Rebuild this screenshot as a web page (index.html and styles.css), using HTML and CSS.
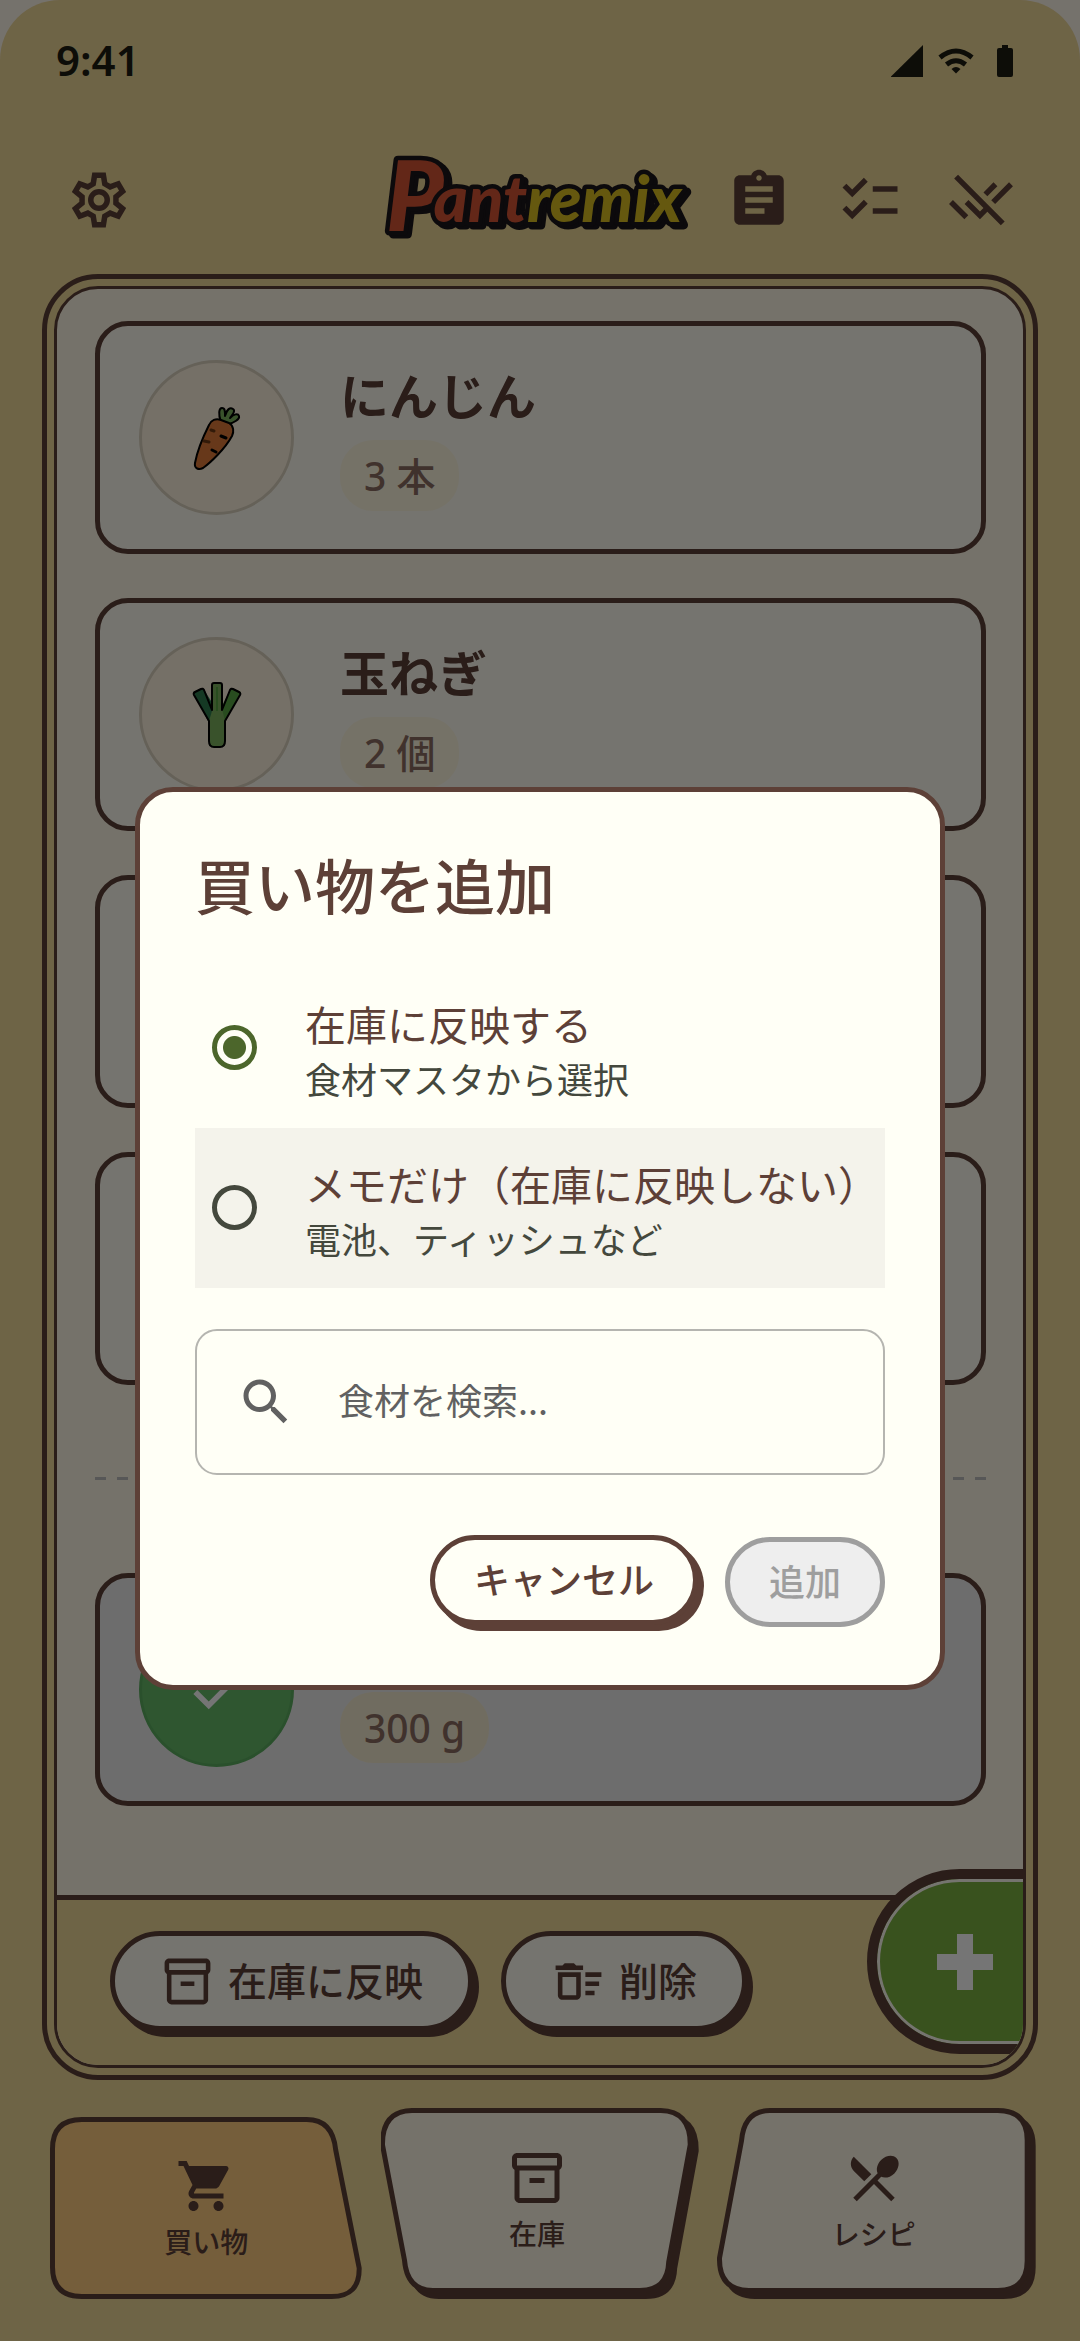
FILE: index.html
```html
<!DOCTYPE html>
<html lang="ja">
  <head>
    <meta charset="UTF-8" />
    <meta name="viewport" content="width=device-width, initial-scale=1.0" />
    <title>Pantremix</title>
    <link rel="stylesheet" href="styles.css">
  </head>
  <body>
    <!-- shared icons -->
    <svg class="sprite" width="0" height="0">
      <symbol id="i-box" viewBox="0 0 24 24">
        <path d="M20 2H4c-1 0-2 .9-2 2v3.01c0 .72.43 1.34 1 1.69V20c0 1.1 1.1 2 2 2h14c.9 0 2-.9 2-2V8.7c.57-.35 1-.97 1-1.69V4c0-1.1-1-2-2-2zm-1 18H5V9h14v11zm1-13H4V4h16v3zM9 12h6v2H9z" />
      </symbol>
    </svg>

    <div class="app">
      <div class="status">
        <span class="time">9:41</span>
        <svg class="status-icons" viewBox="0 0 128 34">
          <path d="M1 33V32.500L33 1v32z" />
          <g fill="none" stroke="#1d1d12" stroke-width="5">
            <path d="M50 13.500Q66 0.500 82 13.500" />
            <path d="M56.500 20.500Q66 13 75.500 20.500" />
          </g>
          <path d="M61.500 25q4.500-4 9 0L66 29.500z" />
          <path d="M112 1h6v3h3q2 0 2 2v25q0 2-2 2h-12q-2 0-2-2V6q0-2 2-2h3z" />
        </svg>
      </div>

      <header class="header">
        <button class="icon-btn" aria-label="設定">
          <svg viewBox="0 0 24 24">
            <g fill="none" stroke="#5d4037" stroke-width="2">
              <path d="M9.900 6.100L10.400 3h3.200l.5 3.100 1.960 1.130 2.930-1.120 1.600 2.780-2.430 1.980v2.260l2.430 1.980-1.600 2.780-2.930-1.120-1.960 1.130-.5 3.100h-3.200l-.5-3.100-1.960-1.130-2.930 1.120-1.600-2.780 2.430-1.980v-2.260L3.410 8.890l1.600-2.780 2.930 1.120z" />
              <circle cx="12" cy="12" r="3" />
            </g>
          </svg>
        </button>
        <svg class="logo" viewBox="0 0 312 90">
          <text x="1" y="76"><tspan class="big">P</tspan><tspan class="red" dx="-10" dy="-9">ant</tspan><tspan class="yellow">remix</tspan></text>
        </svg>
        <button class="icon-btn" aria-label="メモ">
          <svg viewBox="0 0 24 24"><path d="M19 3h-4.180C14.400 1.840 13.300 1 12 1s-2.400.84-2.820 2H5c-1.100 0-2 .9-2 2v14c0 1.100.9 2 2 2h14c1.100 0 2-.9 2-2V5c0-1.100-.9-2-2-2zm-7 0c.55 0 1 .45 1 1s-.45 1-1 1-1-.45-1-1 .45-1 1-1zm2 14H7v-2h7v2zm3-4H7v-2h10v2zm0-4H7V7h10v2z" /></svg>
        </button>
        <button class="icon-btn" aria-label="すべて選択">
          <svg viewBox="0 0 24 24"><path d="M22 7h-9v2h9V7zm0 8h-9v2h9v-2zM5.540 11L2 7.460l1.410-1.410 2.120 2.120 4.240-4.240 1.410 1.410L5.540 11zm0 8L2 15.460l1.410-1.410 2.120 2.120 4.240-4.240 1.410 1.410L5.540 19z" /></svg>
        </button>
        <button class="icon-btn" aria-label="選択解除">
          <svg viewBox="0 0 24 24"><path d="M1.790 12l5.580 5.590L5.960 19 .37 13.410 1.790 12zm.45-7.780L12.900 14.890l-1.280 1.280L7.440 12l-1.410 1.410L11.620 19l2.690-2.690 4.890 4.890 1.410-1.410L3.650 2.810 2.240 4.220zm14.900 9.270L23.620 7 22.200 5.590l-6.480 6.480 1.420 1.420zM17.960 7l-1.410-1.410-3.650 3.660 1.410 1.410L17.960 7z" /></svg>
        </button>
      </header>

      <main class="frame">
        <div class="panel">
          <div class="list">
            <div class="card">
              <div class="thumb">
                <svg viewBox="0 0 50 66">
                  <g stroke="#000" stroke-width="2" stroke-linejoin="round" stroke-linecap="round">
                    <path fill="#7cb35e" d="M29 17C26 9 27 3 30 3s3 3 3 8C35 4 38 2 41 4s-1 6-3 9c4-4 8-5 9-2s-5 7-11 8z" />
                    <path fill="#e07b39" d="M17 20C19 15 24 13 29 15l8 3c5 3 5 9 3 13C33 44 18 58 11 63c-4 2-9 1-8-5C5 47 12 30 17 20z" />
                    <path fill="none" stroke-width="3" d="M29 31l5 2M20 45l4 2" />
                    <path fill="none" stroke="#6d3a14" stroke-width="3" d="M19 25l3 1M12 36l5 1" />
                  </g>
                </svg>
              </div>
              <div class="card-body">
                <h2 class="name">にんじん</h2>
                <span class="chip">3 本</span>
              </div>
            </div>
            <div class="card">
              <div class="thumb">
                <svg viewBox="0 0 50 66">
                  <path fill="#2e7d4f" d="M1 10L11 6L24 27L21 38L16 39Z" />
                  <path fill="#57a644" d="M49 10L39 6L28 28L27 39L33 39Z" />
                  <path fill="#7cb35e" d="M20 2h10v25l3 12v25H17V39l3-10z" />
                  <path fill="none" stroke="#57a644" stroke-width="2" d="M25 5v24" />
                  <path fill="none" stroke="#000" stroke-width="2" stroke-linejoin="round" d="M20 28V3q0-2 2-2h6q2 0 2 2v25L38 8q1-2 3-1l6 3q2 1 1 3L33 39v20q0 6-5 6h-6q-5 0-5-6V39L2 13q-1-2 1-3l6-3q2-1 3 1z" />
                </svg>
              </div>
              <div class="card-body">
                <h2 class="name">玉ねぎ</h2>
                <span class="chip">2 個</span>
              </div>
            </div>
            <div class="card"></div>
            <div class="card"></div>
            <hr class="divider" />
            <div class="card done">
              <div class="thumb">
                <svg class="check" viewBox="0 0 24 24"><path d="M9 16.170L4.830 12l-1.420 1.410L9 19 21 7l-1.410-1.410z" /></svg>
              </div>
              <div class="card-body">
                <span class="chip">300 g</span>
              </div>
            </div>
          </div>

          <div class="toolbar">
            <button class="pill">
              <svg viewBox="0 0 24 24"><use href="#i-box" /></svg>
              <span>在庫に反映</span>
            </button>
            <button class="pill">
              <svg viewBox="0 0 24 24"><path d="M15 16h4v2h-4zm0-8h7v2h-7zm0 4h6v2h-6zM3 18c0 1.100.9 2 2 2h6c1.100 0 2-.9 2-2V8H3v10zm2-8h6v8H5v-8zm5-6H6L5 5H2v2h12V5h-3z" /></svg>
              <span>削除</span>
            </button>
          </div>

          <button class="fab" aria-label="追加">
            <svg viewBox="0 0 56 56"><path d="M20 0h16v20h20v16H36v20H20V36H0V20h20z" /></svg>
          </button>
        </div>
      </main>

      <nav class="tabs">
        <a class="tab active" href="#">
          <svg class="tab-shape" viewBox="0 0 319 191" preserveAspectRatio="none">
            <path class="face" d="M38 11.500H263Q289 11.500 292 42L315.500 160Q316 188.500 288 188.500H38Q8.500 188.500 8.500 159V41Q8.500 11.500 38 11.500z" />
          </svg>
          <svg class="tab-icon" viewBox="0 0 24 24"><path d="M7 18c-1.100 0-1.990.9-1.990 2S5.900 22 7 22s2-.9 2-2-.9-2-2-2zM1 2v2h2l3.600 7.590-1.350 2.450c-.16.28-.25.61-.25.96 0 1.100.9 2 2 2h12v-2H7.420c-.14 0-.25-.11-.25-.25l.03-.12.9-1.630h7.450c.75 0 1.410-.41 1.750-1.030l3.580-6.490A1.003 1.003 0 0020 4H5.210l-.94-2H1zm16 16c-1.100 0-1.990.9-1.990 2s.89 2 1.990 2 2-.9 2-2-.9-2-2-2z" /></svg>
          <span>買い物</span>
        </a>
        <a class="tab" href="#">
          <svg class="tab-shape" viewBox="0 0 319 191" preserveAspectRatio="none">
            <path class="shade" transform="translate(6 6)" d="M31 2.500H280Q310 3 309.500 37L288 154Q287 182.500 259 182.500H52Q26 182.500 23.500 152L1.500 37Q1 3 31 2.500z" />
            <path class="face" d="M31 2.500H280Q310 3 309.500 37L288 154Q287 182.500 259 182.500H52Q26 182.500 23.500 152L1.500 37Q1 3 31 2.500z" />
          </svg>
          <svg class="tab-icon" viewBox="0 0 24 24"><use href="#i-box" /></svg>
          <span>在庫</span>
        </a>
        <a class="tab" href="#">
          <svg class="tab-shape" viewBox="0 0 319 191" preserveAspectRatio="none">
            <path class="shade" transform="translate(6 6)" d="M53 2.500H281Q310.500 2.500 310.500 32V153Q310.500 182.500 281 182.500H32Q2 182 2.500 150L24.500 33Q27 2.500 53 2.500z" />
            <path class="face" d="M53 2.500H281Q310.500 2.500 310.500 32V153Q310.500 182.500 281 182.500H32Q2 182 2.500 150L24.500 33Q27 2.500 53 2.500z" />
          </svg>
          <svg class="tab-icon" viewBox="0 0 24 24"><path d="M8.100 13.340l2.830-2.830L3.910 3.500c-1.560 1.560-1.560 4.090 0 5.660l4.190 4.180zm6.780-1.810c1.530.71 3.680.21 5.270-1.380 1.910-1.910 2.280-4.650.81-6.120-1.460-1.460-4.200-1.100-6.120.81-1.590 1.590-2.090 3.740-1.380 5.270L3.700 19.870l1.410 1.410L12 14.410l6.880 6.880 1.410-1.410L13.410 13l1.470-1.470z" /></svg>
          <span>レシピ</span>
        </a>
      </nav>
    </div>

    <div class="overlay">
      <form class="dialog" role="dialog" aria-labelledby="dialog-title">
        <h1 id="dialog-title">買い物を追加</h1>
        <label class="option">
          <input type="radio" name="kind" checked />
          <span class="option-text">
            <span class="option-title">在庫に反映する</span>
            <span class="option-sub">食材マスタから選択</span>
          </span>
        </label>
        <label class="option hover">
          <input type="radio" name="kind" />
          <span class="option-text">
            <span class="option-title">メモだけ（在庫に反映しない）</span>
            <span class="option-sub">電池、ティッシュなど</span>
          </span>
        </label>
        <label class="search">
          <svg viewBox="0 0 24 24"><path d="M15.500 14h-.79l-.28-.27C15.410 12.590 16 11.110 16 9.500 16 5.910 13.090 3 9.500 3S3 5.910 3 9.500 5.910 16 9.500 16c1.610 0 3.090-.59 4.230-1.570l.27.28v.79l5 4.990L20.490 19l-4.990-5zm-6 0C7.010 14 5 11.990 5 9.500S7.010 5 9.500 5 14 7.010 14 9.500 11.990 14 9.500 14z" /></svg>
          <input type="text" placeholder="食材を検索..." aria-label="食材を検索" />
        </label>
        <div class="actions">
          <button type="button" class="btn">キャンセル</button>
          <button type="submit" class="btn" disabled>追加</button>
        </div>
      </form>
    </div>
  </body>
</html>
```
FILE: styles.css
```css
* {
  box-sizing: border-box;
}
body {
  margin: 0;
  background: #fff8ec;
  color: #5d4037;
  font-family: 'Noto Sans CJK JP', sans-serif;
  font-weight: 500;
}
button,
input {
  font: inherit;
  color: inherit;
}
h1,
h2 {
  margin: 0;
}
svg {
  display: block;
  fill: currentColor;
}
.sprite {
  position: absolute;
}
.app {
  display: flex;
  flex-direction: column;
  min-height: 100vh;
  background: #f0d999;
  border-radius: 60px 60px 0 0;
}

/* status bar + header */
.status {
  display: flex;
  align-items: center;
  justify-content: space-between;
  height: 122px;
  padding: 0 62px 0 56px;
  color: #1d1d12;
}
.time {
  padding-bottom: 4px;
  font-family: 'Noto Sans', sans-serif;
  font-size: 42px;
  font-weight: 600;
}
.status-icons {
  width: 128px;
  height: 34px;
}
.header {
  display: flex;
  align-items: center;
  gap: 45px;
  height: 152px;
  padding: 3px 66px 0;
}
.icon-btn {
  padding: 0;
  border: 0;
  background: none;
}
.icon-btn svg {
  width: 66px;
  height: 66px;
}
.logo {
  width: 312px;
  height: 90px;
  margin-left: auto;
  margin-right: -16px;
  overflow: visible;
  fill: #d75536;
  stroke: #1b161b;
  stroke-width: 9px;
  stroke-linejoin: round;
  paint-order: stroke;
  filter: drop-shadow(4px 3px 0 #1b161b);
  font-family: 'Lato', sans-serif;
  font-size: 65px;
  font-style: italic;
  font-weight: 900;
}
.logo .big {
  font-size: 98px;
}
.logo .yellow {
  fill: #dcc121;
}

/* framed list */
.frame {
  display: flex;
  flex: 1;
  margin: 0 42px;
  padding: 7px;
  border: 5px solid #5d4037;
  border-radius: 56px;
}
.panel {
  position: relative;
  display: flex;
  flex: 1;
  flex-direction: column;
  overflow: hidden;
  background: #fff8e7;
  border: 3px solid #5d4037;
  border-radius: 44px;
}
.list {
  display: flex;
  flex: 1;
  flex-direction: column;
  gap: 44px;
  padding: 32px 37px 32px 38px;
}
.card {
  display: flex;
  gap: 46px;
  align-items: center;
  height: 233px;
  padding: 0 39px;
  background: #fffdf2;
  border: 5px solid #5d4037;
  border-radius: 33px;
}
.card.done {
  background: #eee;
}
.thumb {
  display: flex;
  align-items: center;
  justify-content: center;
  width: 155px;
  height: 155px;
  background: #fff3e0;
  border: 3px solid #dcd3c0;
  border-radius: 50%;
}
.thumb svg {
  width: 50px;
  height: 66px;
}
.done .thumb {
  background: #66bb6a;
  border-color: #5cae60;
}
.thumb .check {
  width: 66px;
  fill: #fff;
}
.card-body {
  display: flex;
  flex-direction: column;
  align-items: flex-start;
  justify-content: flex-end;
  height: 147px;
}
.name {
  margin-bottom: 13px;
  font-size: 49px;
  font-weight: 700;
  line-height: 66px;
}
.chip {
  padding: 0 24px;
  background: #fff8e1;
  border-radius: 33px;
  color: #8d6e63;
  font-family: 'Noto Sans', 'Noto Sans CJK JP', sans-serif;
  font-size: 39px;
  line-height: 71px;
}
.done .chip {
  background: #f5ecd2;
}
.divider {
  width: 100%;
  height: 3px;
  margin: 48px 0 49px;
  border: 0;
  background: repeating-linear-gradient(90deg, #bdbdbd 0 11px, transparent 11px 22px);
}
.toolbar {
  display: flex;
  gap: 28px;
  height: 170px;
  padding: 31px 53px;
  background: #f0d999;
  border-top: 5px solid #5d4037;
}
.pill {
  display: flex;
  align-items: center;
  gap: 13px;
  height: 100px;
  padding: 0 45px;
  background: #fffdf2;
  border: 5px solid #5d4037;
  border-radius: 50px;
  box-shadow: 6px 6px 0 #5d4037;
  font-size: 39px;
}
.pill svg {
  width: 55px;
  height: 55px;
}
.pill span {
  padding-bottom: 5px;
}
.fab {
  position: absolute;
  right: -40px;
  bottom: 11px;
  display: flex;
  align-items: center;
  justify-content: center;
  width: 196px;
  height: 185px;
  background: #7cb342;
  border: 10px solid #5d4037;
  border-radius: 93px 0 0 93px;
  box-shadow: inset 0 0 0 3px #fffdf2;
  color: #fff;
}
.fab svg {
  width: 56px;
  height: 56px;
}

/* bottom tabs */
.tabs {
  display: flex;
  gap: 18px;
  height: 261px;
  padding: 28px 44px 42px;
}
.tab {
  position: relative;
  display: flex;
  flex: 1;
  flex-direction: column;
  align-items: center;
  gap: 5px;
  padding: 40px 6px 0 0;
  color: #5d4037;
  font-size: 28px;
  line-height: 40px;
  text-decoration: none;
}
.tab.active {
  padding: 48px 0 0 6px;
}
.tab-shape {
  position: absolute;
  left: 0;
  top: 0;
  width: 100%;
  height: 191px;
}
.face {
  fill: #fff8e7;
  stroke: #5d4037;
  stroke-width: 5px;
}
.active .face {
  fill: #ffcc80;
}
.shade {
  stroke: #5d4037;
  stroke-width: 5px;
}
.tab-icon,
.tab span {
  position: relative;
}
.tab-icon {
  width: 60px;
  height: 60px;
}

/* dialog */
.overlay {
  position: fixed;
  inset: 0;
  display: flex;
  align-items: center;
  justify-content: center;
  padding: 135px 135px 0;
  background: rgba(0, 0, 0, 0.54);
}
.dialog {
  flex: 1;
  padding: 55px;
  background: #fffff6;
  border: 5px solid #5d4037;
  border-radius: 38px;
}
.dialog h1 {
  margin-bottom: 48px;
  font-size: 60px;
  font-weight: 500;
  line-height: 73px;
}
.option {
  display: flex;
  align-items: center;
  gap: 48px;
  height: 160px;
  padding-left: 17px;
}
.option.hover {
  background: #f4f3eb;
}
.option input {
  appearance: none;
  flex: none;
  width: 45px;
  height: 45px;
  margin: 0;
  border: 5px solid #44483d;
  border-radius: 50%;
}
.option input:checked {
  border-color: #4c662b;
  background: radial-gradient(#4c662b 11px, transparent 12px);
}
.option-text {
  display: flex;
  flex-direction: column;
  padding-bottom: 2px;
  white-space: nowrap;
}
.option-title {
  font-size: 41px;
  font-weight: 400;
  line-height: 62px;
}
.option-sub {
  color: #44483d;
  font-size: 36px;
  font-weight: 400;
  line-height: 48px;
}
.search {
  display: flex;
  align-items: center;
  gap: 42px;
  height: 146px;
  margin: 41px 0 60px;
  padding: 0 39px;
  border: 2px solid #b5b5b0;
  border-radius: 22px;
  color: #616161;
}
.search svg {
  flex: none;
  width: 60px;
  height: 60px;
}
.search input {
  flex: 1;
  min-width: 0;
  padding: 0 0 5px;
  border: 0;
  outline: 0;
  background: none;
  font-size: 36px;
  font-weight: 400;
}
.search input::placeholder {
  color: #616161;
}
.actions {
  display: flex;
  align-items: center;
  justify-content: flex-end;
  gap: 22px;
}
.btn {
  height: 90px;
  margin: 0 5px 5px 0;
  padding: 0 39px 4px;
  background: #fffff6;
  border: 5px solid #5d4037;
  border-radius: 45px;
  box-shadow: 6px 6px 0 #5d4037;
  font-size: 36px;
}
.btn:disabled {
  margin: 0;
  background: #eee;
  border-color: #9e9e9e;
  box-shadow: none;
  color: #9e9e9e;
}
```
